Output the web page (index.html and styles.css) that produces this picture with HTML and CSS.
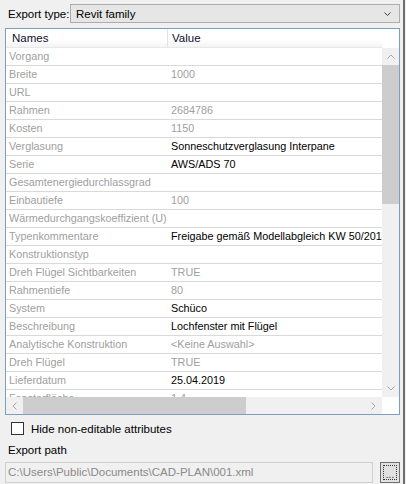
FILE: index.html
```html
<!DOCTYPE html>
<html>
<head>
<meta charset="utf-8">
<link rel="stylesheet" href="styles.css">
</head>
<body>
<div class="window">
  <div class="main">
    <div class="type-row">
      <span class="label">Export type:</span>
      <div class="combo">
        <span class="combo-text">Revit family</span>
        <svg class="combo-arrow" width="7" height="4" viewBox="0 0 7 4"><path d="M0.5 0.5 L3.5 3.5 L6.5 0.5" fill="none" stroke="#404040" stroke-width="1"/></svg>
      </div>
    </div>
    <div class="grid">
      <div class="header">
        <div class="h-names">Names</div>
        <div class="h-value">Value</div>
      </div>
      <div class="header-corner"></div>
      <div class="viewport">
        <div class="row"><div class="n">Vorgang</div><div class="v"></div></div>
        <div class="row"><div class="n">Breite</div><div class="v">1000</div></div>
        <div class="row"><div class="n">URL</div><div class="v"></div></div>
        <div class="row"><div class="n">Rahmen</div><div class="v">2684786</div></div>
        <div class="row"><div class="n">Kosten</div><div class="v">1150</div></div>
        <div class="row"><div class="n">Verglasung</div><div class="v e">Sonneschutzverglasung Interpane</div></div>
        <div class="row"><div class="n">Serie</div><div class="v e">AWS/ADS 70</div></div>
        <div class="row"><div class="n">Gesamtenergiedurchlassgrad</div><div class="v"></div></div>
        <div class="row"><div class="n">Einbautiefe</div><div class="v">100</div></div>
        <div class="row"><div class="n">Wärmedurchgangskoeffizient (U)</div><div class="v"></div></div>
        <div class="row"><div class="n">Typenkommentare</div><div class="v e">Freigabe gemäß Modellabgleich KW 50/2018</div></div>
        <div class="row"><div class="n">Konstruktionstyp</div><div class="v"></div></div>
        <div class="row"><div class="n">Dreh Flügel Sichtbarkeiten</div><div class="v">TRUE</div></div>
        <div class="row"><div class="n">Rahmentiefe</div><div class="v">80</div></div>
        <div class="row"><div class="n">System</div><div class="v e">Schüco</div></div>
        <div class="row"><div class="n">Beschreibung</div><div class="v e">Lochfenster mit Flügel</div></div>
        <div class="row"><div class="n">Analytische Konstruktion</div><div class="v">&lt;Keine Auswahl&gt;</div></div>
        <div class="row"><div class="n">Dreh Flügel</div><div class="v">TRUE</div></div>
        <div class="row"><div class="n">Lieferdatum</div><div class="v e">25.04.2019</div></div>
        <div class="row"><div class="n">Fensterfläche</div><div class="v">1,4</div></div>
      </div>
      <div class="vscroll">
        <div class="sb-btn"><svg width="8" height="5" viewBox="0 0 8 5"><path d="M0.5 4.5 L4 1 L7.5 4.5" fill="none" stroke="#a6a6a6" stroke-width="1"/></svg></div>
        <div class="v-thumb"></div>
        <div class="v-track"></div>
        <div class="sb-btn"><svg width="8" height="5" viewBox="0 0 8 5"><path d="M0.5 0.5 L4 4 L7.5 0.5" fill="none" stroke="#a6a6a6" stroke-width="1"/></svg></div>
      </div>
      <div class="hscroll">
        <div class="sb-btn"><svg width="5" height="8" viewBox="0 0 5 8"><path d="M4.5 0.5 L1 4 L4.5 7.5" fill="none" stroke="#a6a6a6" stroke-width="1"/></svg></div>
        <div class="h-thumb"></div>
        <div class="h-track"></div>
        <div class="sb-btn"><svg width="5" height="8" viewBox="0 0 5 8"><path d="M0.5 0.5 L4 4 L0.5 7.5" fill="none" stroke="#a6a6a6" stroke-width="1"/></svg></div>
      </div>
      <div class="corner"></div>
    </div>
    <div class="check-row">
      <span class="checkbox"></span>
      <span class="check-label">Hide non-editable attributes</span>
    </div>
    <div class="path-label">Export path</div>
    <div class="path-row">
      <div class="path-box">C:\Users\Public\Documents\CAD-PLAN\001.xml</div>
      <div class="browse"><div class="focus"><span class="dots">...</span></div></div>
    </div>
  </div>
  <div class="edge"></div>
  <div class="filler"></div>
</div>
</body>
</html>
```

FILE: styles.css
```css
html, body {
  margin: 0;
  padding: 0;
  background: #f0f0f0;
}
body {
  font-family: "Liberation Sans", Arial, sans-serif;
  font-size: 10.8px;
  color: #000;
}
.window {
  display: flex;
  width: 406px;
  height: 484px;
  overflow: hidden;
}
.main {
  width: 403px;
  padding: 0 3px 0 5px;
  box-sizing: border-box;
}
.edge {
  width: 2px;
  background: #6e6e6e;
}
.filler {
  width: 1px;
}
.type-row {
  display: flex;
  align-items: center;
  margin-top: 4px;
  height: 19px;
}
.label {
  flex: 1;
  padding-left: 3px;
  font-size: 11.5px;
}
.combo {
  width: 330px;
  height: 19px;
  box-sizing: border-box;
  border: 1px solid #acacac;
  background: #e6e6e6;
  display: flex;
  align-items: center;
  padding-left: 5px;
}
.combo-text {
  flex: 1;
  font-size: 11.5px;
}
.combo-arrow {
  margin-right: 8px;
}
.grid {
  margin-top: 5px;
  border: 1px solid #7f9dbd;
  display: grid;
  grid-template-columns: 376px 17px;
  grid-template-rows: 19px 349px 17px;
  background: #fff;
}
.header {
  display: flex;
  background: linear-gradient(#ffffff, #ffffff 60%, #f4f4f4);
  border-bottom: 1px solid #e8e8e8;
  box-sizing: border-box;
  height: 19px;
  line-height: 18px;
  font-size: 11.5px;
}
.h-names {
  width: 162px;
  padding-left: 6px;
  box-sizing: border-box;
  border-right: 1px solid #e3e3e3;
  color: #0d0d2b;
}
.h-value {
  padding-left: 4px;
  color: #0d0d2b;
}
.header-corner {
  background: #fff;
}
.viewport {
  overflow: hidden;
  background: #fff;
}
.row {
  display: flex;
  height: 18px;
  box-sizing: border-box;
  border-bottom: 1px solid #d9d9d9;
  line-height: 17px;
  white-space: nowrap;
}
.n {
  width: 163px;
  flex: none;
  padding-left: 3px;
  box-sizing: border-box;
  color: #a0a0a0;
  overflow: hidden;
}
.v {
  padding-left: 2px;
  color: #a0a0a0;
}
.v.e {
  color: #000;
}
.vscroll {
  display: flex;
  flex-direction: column;
  background: #f0f0f0;
}
.sb-btn {
  width: 17px;
  height: 17px;
  flex: none;
  display: flex;
  align-items: center;
  justify-content: center;
  background: #f0f0f0;
}
.v-thumb {
  height: 139px;
  background: #cdcdcd;
}
.v-track {
  flex: 1;
}
.hscroll {
  display: flex;
  background: #f0f0f0;
}
.h-thumb {
  width: 223px;
  background: #cdcdcd;
}
.h-track {
  flex: 1;
}
.corner {
  background: #fff;
}
.check-row {
  display: flex;
  align-items: center;
  margin-top: 7px;
  height: 13px;
}
.checkbox {
  width: 13px;
  height: 13px;
  box-sizing: border-box;
  border: 1px solid #333;
  background: #fff;
  margin-left: 6px;
}
.check-label {
  margin-left: 7px;
  font-size: 11.5px;
}
.path-label {
  margin-top: 7px;
  height: 16px;
  line-height: 16px;
  padding-left: 3px;
  font-size: 11.5px;
}
.path-row {
  display: flex;
  margin-top: 4px;
  height: 21px;
}
.path-box {
  width: 368px;
  height: 21px;
  box-sizing: border-box;
  border: 1px solid #cfcfcf;
  background: #f0f0f0;
  color: #8a8a8a;
  padding-left: 2px;
  line-height: 19px;
  font-size: 11.5px;
  white-space: nowrap;
}
.browse {
  margin-left: 7px;
  width: 20px;
  height: 21px;
  box-sizing: border-box;
  border: 1px solid #707070;
  background: #e1e1e1;
  padding: 2px;
}
.focus {
  height: 100%;
  box-sizing: border-box;
  border: 1px dotted #333;
  display: flex;
  align-items: flex-end;
  justify-content: center;
}
.dots {
  font-size: 10px;
  line-height: 8px;
  color: #333;
  letter-spacing: 0;
}
```
